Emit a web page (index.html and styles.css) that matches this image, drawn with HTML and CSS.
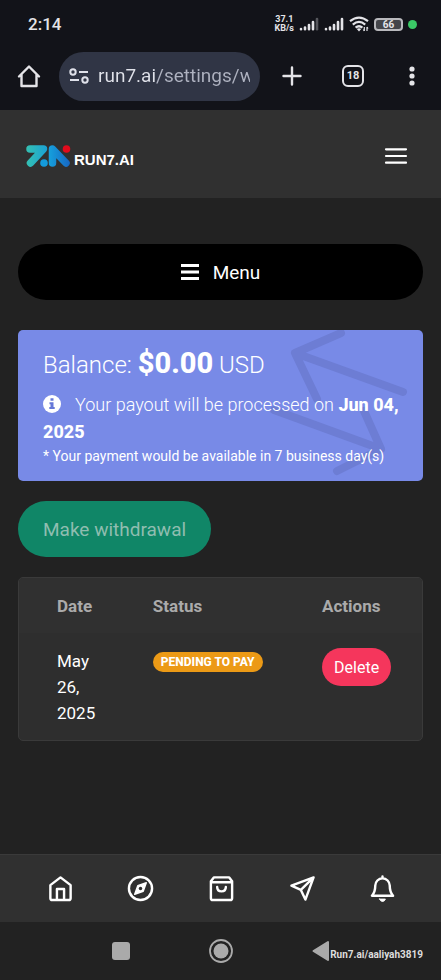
FILE: index.html
```html
<!DOCTYPE html>
<html lang="en">
<head>
<meta charset="utf-8">
<meta name="viewport" content="width=device-width, initial-scale=1">
<title>RUN7.AI</title>
<link rel="stylesheet" href="styles.css">
</head>
<body>
<div class="browser">
  <div class="status">
    <span class="clock">2:14</span>
    <div class="indicators">
      <span class="speed">37.1<br>KB/s</span>
      <svg width="20" height="14" viewBox="0 0 20 14" stroke="#e4e4e8" stroke-width="2.6" stroke-linecap="round"><path d="M2 12v.2M6 10.500v1.700M10 8v4.200M14 5v7.200"/><path stroke="#55565c" d="M18 2v10.200"/></svg>
      <svg width="20" height="14" viewBox="0 0 20 14" stroke="#e4e4e8" stroke-width="2.6" stroke-linecap="round"><path d="M2 12v.2M6 10.500v1.700M10 8v4.200M14 5v7.200M18 2v10.200"/></svg>
      <svg width="20" height="16" viewBox="0 0 20 16" fill="none" stroke="#e4e4e8" stroke-width="2.200"><path d="M1 5.200Q10-2 19 5.200M3.800 8.600Q10 3.200 16.200 8.600M6.600 11.700Q10 8.800 13.400 11.700"/><path fill="#e4e4e8" stroke="none" d="M7.800 13Q10 11.400 12.200 13L10 15.500z"/><path stroke-width="1.200" d="M15.300 11v4M18 11v4M14.300 13.500l1 1.500M19 12.500l-1-1.500"/></svg>
      <span class="battery">66</span>
      <span class="dot"></span>
    </div>
  </div>
  <div class="toolbar">
    <button aria-label="Home"><svg width="24" height="24" viewBox="0 0 24 24" fill="none" stroke="#e4e4e8" stroke-width="2.400" stroke-linejoin="round" stroke-linecap="round"><path d="M2 12.500 12 2.500l10 10M4.500 10.500V22h15V10.500"/></svg></button>
    <div class="address">
      <svg width="20" height="16" viewBox="0 0 20 16" fill="none" stroke="#dfe1ea" stroke-width="2"><circle cx="4" cy="4" r="2.700"/><path d="M10 4h9M1 12h9"/><circle cx="16" cy="12" r="2.700"/></svg>
      <input type="text" aria-label="Address" value="run7.ai/settings/w">
    </div>
    <button class="plus" aria-label="New tab"><svg width="20" height="20" viewBox="0 0 20 20" stroke="#e4e4e8" stroke-width="2.400" stroke-linecap="round"><path d="M1.500 10h17M10 1.500v17"/></svg></button>
    <button class="tabs">18</button>
    <button aria-label="More"><svg width="6" height="20" viewBox="0 0 6 20" fill="#e4e4e8"><circle cx="3" cy="3" r="2.600"/><circle cx="3" cy="10" r="2.600"/><circle cx="3" cy="17" r="2.600"/></svg></button>
  </div>
</div>

<header class="site">
  <a class="logo" href="#">
    <svg width="45" height="23" viewBox="26 143 45 23" fill="none" stroke-width="7.500" stroke-linecap="round" stroke-linejoin="round">
      <defs>
        <linearGradient id="g" gradientUnits="userSpaceOnUse" x1="26" y1="0" x2="70" y2="0"><stop offset="0" stop-color="#35c1b1"/><stop offset=".55" stop-color="#169ddb"/><stop offset="1" stop-color="#1767c3"/></linearGradient>
      </defs>
      <path stroke="url(#g)" d="M30 147h13.500L30.500 161"/>
      <circle cx="44" cy="161" r="3.800" fill="#149bdc"/>
      <path stroke="url(#g)" d="M52.500 161V147l13.500 14"/>
      <circle cx="66.500" cy="147" r="3.800" fill="#e20b1c"/>
    </svg>
    <span>RUN7.AI</span>
  </a>
  <button aria-label="Navigation"><svg width="24" height="18" viewBox="0 0 24 18" stroke="#fff" stroke-width="2.200" stroke-linecap="round"><path d="M2 2.300h20M2 9h20M2 15.700h20"/></svg></button>
</header>

<main>
  <button class="menu"><svg width="18" height="16" viewBox="0 0 18 16" fill="#fff"><path d="M0 0h18v3H0zM0 6.500h18v3H0zM0 13h18v3H0z"/></svg>Menu</button>

  <section class="balance">
    <svg class="mark" width="140" height="151" viewBox="268 330 140 151" fill="none" stroke="#6d7dd4" stroke-width="8" stroke-linecap="round" stroke-linejoin="round"><path d="M341 333 295 353 403 392M295 353 317 399M274 410 381 449 364 411M381 449 337 471"/></svg>
    <p class="amount">Balance: <strong>$0.00</strong> USD</p>
    <p class="payout"><svg width="18" height="18" viewBox="0 0 18 18"><circle cx="9" cy="9" r="9" fill="#fff"/><path fill="#6577d8" d="M7.500 3.200h3v2.600h-3zM6.500 7.200h4v4.800h1.200v2H6.300v-2h1.200V9.200h-1z"/></svg>Your payout will be processed on <strong>Jun 04, 2025</strong></p>
    <p class="note">* Your payment would be available in 7 business day(s)</p>
  </section>

  <button class="withdraw" disabled>Make withdrawal</button>

  <div class="panel">
    <table>
      <thead><tr><th class="date">Date</th><th class="state">Status</th><th>Actions</th></tr></thead>
      <tbody><tr><td class="date">May 26, 2025</td><td><span class="badge">PENDING TO PAY</span></td><td><button class="delete">Delete</button></td></tr></tbody>
    </table>
  </div>
</main>

<nav class="bottom" aria-label="Main">
  <a href="#" aria-label="Home"><svg viewBox="0 0 28 28"><path d="M3.500 10.500 14 2.500l10.500 8V24q0 2-2 2h-17q-2 0-2-2zM10.300 26V14.500h7.400V26"/></svg></a>
  <a href="#" aria-label="Explore"><svg viewBox="0 0 28 28"><circle cx="14" cy="14" r="12"/><path fill="#fff" stroke-width="1.500" d="m20 8-3.200 8.800L8 20l3.200-8.800z"/><circle cx="14" cy="14" r="1.800" fill="#303030" stroke="none"/></svg></a>
  <a href="#" aria-label="Shop"><svg viewBox="0 0 28 28"><path d="M3 6.500 6 2.500h16l3 4V24q0 2-2 2H5q-2 0-2-2zM3 7.500h22M9.500 12.500q0 4.500 4.500 4.500t4.500-4.500"/></svg></a>
  <a href="#" aria-label="Messages"><svg viewBox="0 0 28 28"><path d="M25.500 2.500 2.500 11l9.800 4.500L17 25.500zM25.500 2.500 12.300 15.500"/></svg></a>
  <a href="#" aria-label="Notifications"><svg viewBox="0 0 28 28"><path d="M14 1.500v2M3 21.500h22Q21.500 18 21.500 11a7.500 7.500 0 0 0-15 0Q6.500 18 3 21.500z"/><path fill="#fff" stroke-width="1" d="M11 25h6q-1 2.500-3 2.500T11 25z"/></svg></a>
</nav>

<footer class="system">
  <button aria-label="Recent apps"><svg width="18" height="18"><rect width="18" height="18" rx="3" fill="#aaa"/></svg></button>
  <button aria-label="Home screen"><svg width="24" height="24" viewBox="0 0 24 24"><circle cx="12" cy="12" r="11" fill="none" stroke="#aaa" stroke-width="1.800"/><circle cx="12" cy="12" r="7.500" fill="#aaa"/></svg></button>
  <button aria-label="Back"><svg width="18" height="22" viewBox="0 0 18 22"><path d="M1.500 11 16 2v18z" fill="#aaa" stroke="#aaa" stroke-width="2" stroke-linejoin="round"/></svg></button>
  <span class="tag">Run7.ai/aaliyah3819</span>
</footer>
</body>
</html>
```
FILE: styles.css
```css
* { box-sizing: border-box; }
body {
  margin: 0;
  min-height: 100vh;
  display: flex;
  flex-direction: column;
  background: #222;
  color: #fff;
  font-family: Roboto, "Liberation Sans", sans-serif;
}
button {
  border: 0;
  padding: 0;
  background: none;
  color: inherit;
  font-family: inherit;
}
svg { display: block; flex: none; }
p { margin: 0; }

.browser { height: 110px; background: #121319; color: #e4e4e8; }
.status {
  height: 48px;
  padding: 0 24px 0 28px;
  display: flex;
  align-items: center;
  justify-content: space-between;
}
.clock { font-size: 17px; font-weight: 500; }
.indicators { display: flex; align-items: center; gap: 5px; }
.speed { font-size: 9px; line-height: 9px; font-weight: 700; text-align: center; }
.battery {
  width: 29px;
  height: 13px;
  border: 2px solid #b9b9bd;
  border-radius: 4px;
  background: #44454a;
  font-size: 10px;
  line-height: 9px;
  font-weight: 700;
  text-align: center;
}
.dot { width: 9px; height: 9px; border-radius: 50%; background: #3bc966; }
.toolbar {
  height: 56px;
  padding: 0 26px 0 17px;
  display: flex;
  align-items: center;
}
.address {
  flex: 1;
  min-width: 0;
  height: 49px;
  margin: 0 22px 0 18px;
  padding: 0 10px;
  display: flex;
  align-items: center;
  gap: 9px;
  border-radius: 25px;
  background: #303545;
}
.address input {
  flex: 1;
  min-width: 0;
  border: 0;
  padding: 0;
  background: linear-gradient(90deg, #e0e2ea 58px, #aeb2c0 58px);
  background-clip: text;
  color: transparent;
  font: 19px/28px Roboto, sans-serif;
}
.plus { margin-right: 40px; }
.tabs {
  width: 22px;
  height: 22px;
  margin-right: 45px;
  border: 2px solid #e4e4e8;
  border-radius: 6px;
  font-size: 11px;
  line-height: 18px;
  font-weight: 700;
}

.site {
  height: 88px;
  padding: 4px 33px 0 26px;
  display: flex;
  align-items: center;
  justify-content: space-between;
  background: #303030;
}
.logo {
  display: flex;
  align-items: flex-end;
  gap: 3px;
  color: #fff;
  text-decoration: none;
  font: 700 15px/16px "Liberation Sans", sans-serif;
}

main { flex: 1; padding: 46px 18px 20px; }
.menu {
  width: 100%;
  height: 56px;
  display: flex;
  align-items: center;
  justify-content: center;
  gap: 14px;
  border-radius: 28px;
  background: #000;
  font-size: 19px;
}
.balance {
  position: relative;
  margin-top: 30px;
  padding: 14px 16px 13px 25px;
  border-radius: 5px;
  background: #788ae7;
}
.mark { position: absolute; top: 0; right: 15px; }
.balance p { position: relative; }
.amount { font-size: 24px; line-height: 42px; font-weight: 300; }
.amount strong { font-size: 29px; line-height: 29px; font-weight: 800; }
.payout { padding-top: 5px; font-size: 18px; line-height: 27px; font-weight: 300; }
.payout strong { font-weight: 800; }
.payout svg { display: inline-block; margin-right: 14px; vertical-align: -2px; }
.note { font-size: 14px; line-height: 23px; }
.withdraw {
  height: 56px;
  margin-top: 20px;
  padding: 0 25px;
  border-radius: 28px;
  background: #108667;
  color: #8fbdb0;
  font-size: 19px;
}
.panel {
  margin-top: 20px;
  border: 1px solid #3a3a3a;
  border-radius: 5px;
  background: #2e2e2e;
  overflow: hidden;
}
table {
  width: 100%;
  table-layout: fixed;
  border-collapse: collapse;
  font-size: 17px;
  line-height: 26px;
  text-align: left;
}
th { padding: 15px 0 14px 21px; background: #303030; color: #aaa; font-weight: 700; }
td { padding: 15px 0 14px 21px; vertical-align: top; }
.date { width: 28%; padding-left: 38px; }
td.date { padding-right: 34px; }
.state { width: 42%; }
.badge {
  display: block;
  width: max-content;
  margin-top: 4px;
  padding: 0 8px;
  border-radius: 10px;
  background: #ec9a16;
  font-size: 12px;
  line-height: 20px;
  font-weight: 800;
}
.delete {
  display: block;
  height: 38px;
  padding: 0 12px;
  border-radius: 19px;
  background: #f5365c;
  font-size: 16px;
}

.bottom {
  height: 68px;
  padding: 0 18px 0 20px;
  display: grid;
  grid-template-columns: repeat(5, 1fr);
  place-items: center;
  border-top: 1px solid #3a3a3a;
  background: #303030;
}
.bottom svg {
  width: 27px;
  height: 27px;
  fill: none;
  stroke: #fff;
  stroke-width: 2.5;
  stroke-linejoin: round;
  stroke-linecap: round;
}
.system {
  position: relative;
  height: 58px;
  display: flex;
  justify-content: center;
}
.system button { width: 100px; display: grid; place-items: center; }
.tag {
  position: absolute;
  right: 18px;
  bottom: 17px;
  color: #ddd;
  font-size: 10px;
  line-height: 16px;
  font-weight: 700;
}
```
